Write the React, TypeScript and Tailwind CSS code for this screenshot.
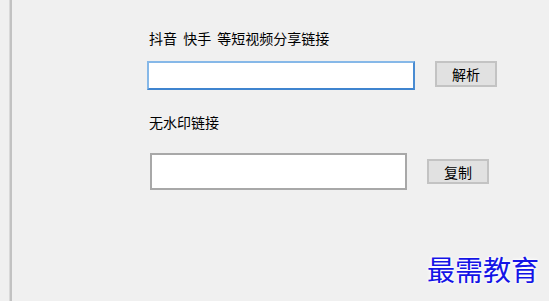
import React from "react";

export default function App() {
  const font = { fontFamily: '"Noto Sans CJK SC", "Noto Sans", sans-serif' };
  return (
    <div
      className="relative flex w-[549px] h-[301px] bg-[#f0f0f0] overflow-hidden text-black"
      style={font}
    >
      <div className="w-[9px] shrink-0" />
      <div className="w-px shrink-0 bg-[#d9d9d9]" />
      <div className="w-[2px] shrink-0 bg-[#c2c2c2]" />
      <div className="flex flex-col pl-[135px] pt-[28px]">
        <div className="ml-[2px] h-[20px] text-[14px] leading-[20px] whitespace-pre [word-spacing:3px]">
          抖音 快手 等短视频分享链接
        </div>
        <div className="mt-[13px] flex items-start gap-[20px]">
          <div className="w-[268px] h-[29px] bg-white border-2 border-t-[#86b8e8] border-l-[#86b8e8] border-r-[#4a8cd2] border-b-[#3f84cf]" />
          <button className="w-[62px] h-[26px] bg-[#e1e1e1] border-2 border-[#c3c3c3] text-[14px] leading-[20px] flex items-center justify-center">
            解析
          </button>
        </div>
        <div className="ml-[2px] mt-[22px] h-[20px] text-[14px] leading-[20px]">
          无水印链接
        </div>
        <div className="ml-[3px] mt-[21px] flex items-center gap-[20px]">
          <div className="w-[257px] h-[37px] bg-white border-2 border-[#a8a8a8]" />
          <button className="w-[62px] h-[25px] bg-[#e1e1e1] border-2 border-[#c3c3c3] text-[14px] leading-[20px] flex items-center justify-center">
            复制
          </button>
        </div>
      </div>
      <div className="absolute left-[427px] top-[253px] text-[28px] leading-[32px] text-[#1414e6] [text-shadow:0_0_2px_#fff,0_0_3px_#fff,0_0_4px_#fff]">
        最需教育
      </div>
    </div>
  );
}
